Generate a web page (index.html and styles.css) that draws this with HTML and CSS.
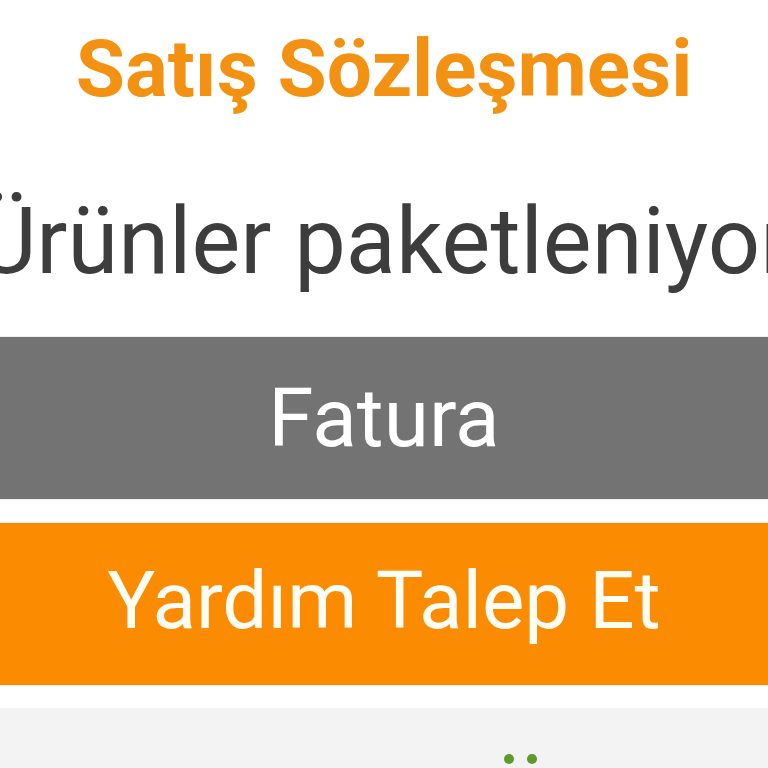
FILE: index.html
```html
<!DOCTYPE html>
<html lang="tr">
<head>
<meta charset="utf-8">
<title>Satış Sözleşmesi</title>
<link rel="stylesheet" href="styles.css">
</head>
<body>
<main class="screen">
  <h1 class="title">Satış Sözleşmesi</h1>
  <p class="status">Ürünler paketleniyor</p>
  <button class="btn btn-gray" type="button">Fatura</button>
  <button class="btn btn-orange" type="button">Yardım Talep Et</button>
  <section class="panel">
    <div class="dots"><span class="dot"></span><span class="dot"></span></div>
  </section>
</main>
</body>
</html>
```

FILE: styles.css
```css
html, body {
  margin: 0;
  padding: 0;
  background: #ffffff;
}
body {
  width: 768px;
  height: 768px;
  overflow: hidden;
  font-family: Roboto, "Noto Sans", "Liberation Sans", sans-serif;
}
.screen {
  display: flex;
  flex-direction: column;
  width: 768px;
  height: 768px;
  overflow: hidden;
}
.title {
  margin: 22px 0 0;
  font-size: 80px;
  font-weight: 700;
  line-height: 94px;
  color: #f39212;
  text-align: center;
  white-space: nowrap;
}
.status {
  margin: 72px 0 0;
  display: flex;
  justify-content: center;
  white-space: nowrap;
  font-size: 92px;
  font-weight: 400;
  line-height: 108px;
  color: #3d3d3d;
}
.btn {
  display: flex;
  align-items: center;
  justify-content: center;
  width: 768px;
  height: 162px;
  margin: 0;
  padding: 0;
  border: 0;
  font-family: Roboto, "Noto Sans", "Liberation Sans", sans-serif;
  color: #ffffff;
  white-space: nowrap;
  flex: none;
}
.btn-gray {
  margin-top: 41px;
  background: #737373;
  font-size: 82px;
  line-height: 96px;
  box-shadow: 0 0 1px rgba(0, 0, 0, 0.35);
}
.btn-orange {
  margin-top: 24px;
  background: #fb8c02;
  color: #fffdf4;
  font-size: 80px;
  line-height: 94px;
  padding-bottom: 6px;
  box-shadow: 0 0 1px rgba(160, 90, 0, 0.35);
}
.panel {
  margin-top: 23px;
  flex: 1;
  background: #f3f3f3;
  padding: 46px 0 0 504px;
}
.dots {
  display: flex;
  gap: 13px;
}
.dot {
  width: 10px;
  height: 10px;
  border-radius: 50%;
  background: #5c9a2c;
}
```
